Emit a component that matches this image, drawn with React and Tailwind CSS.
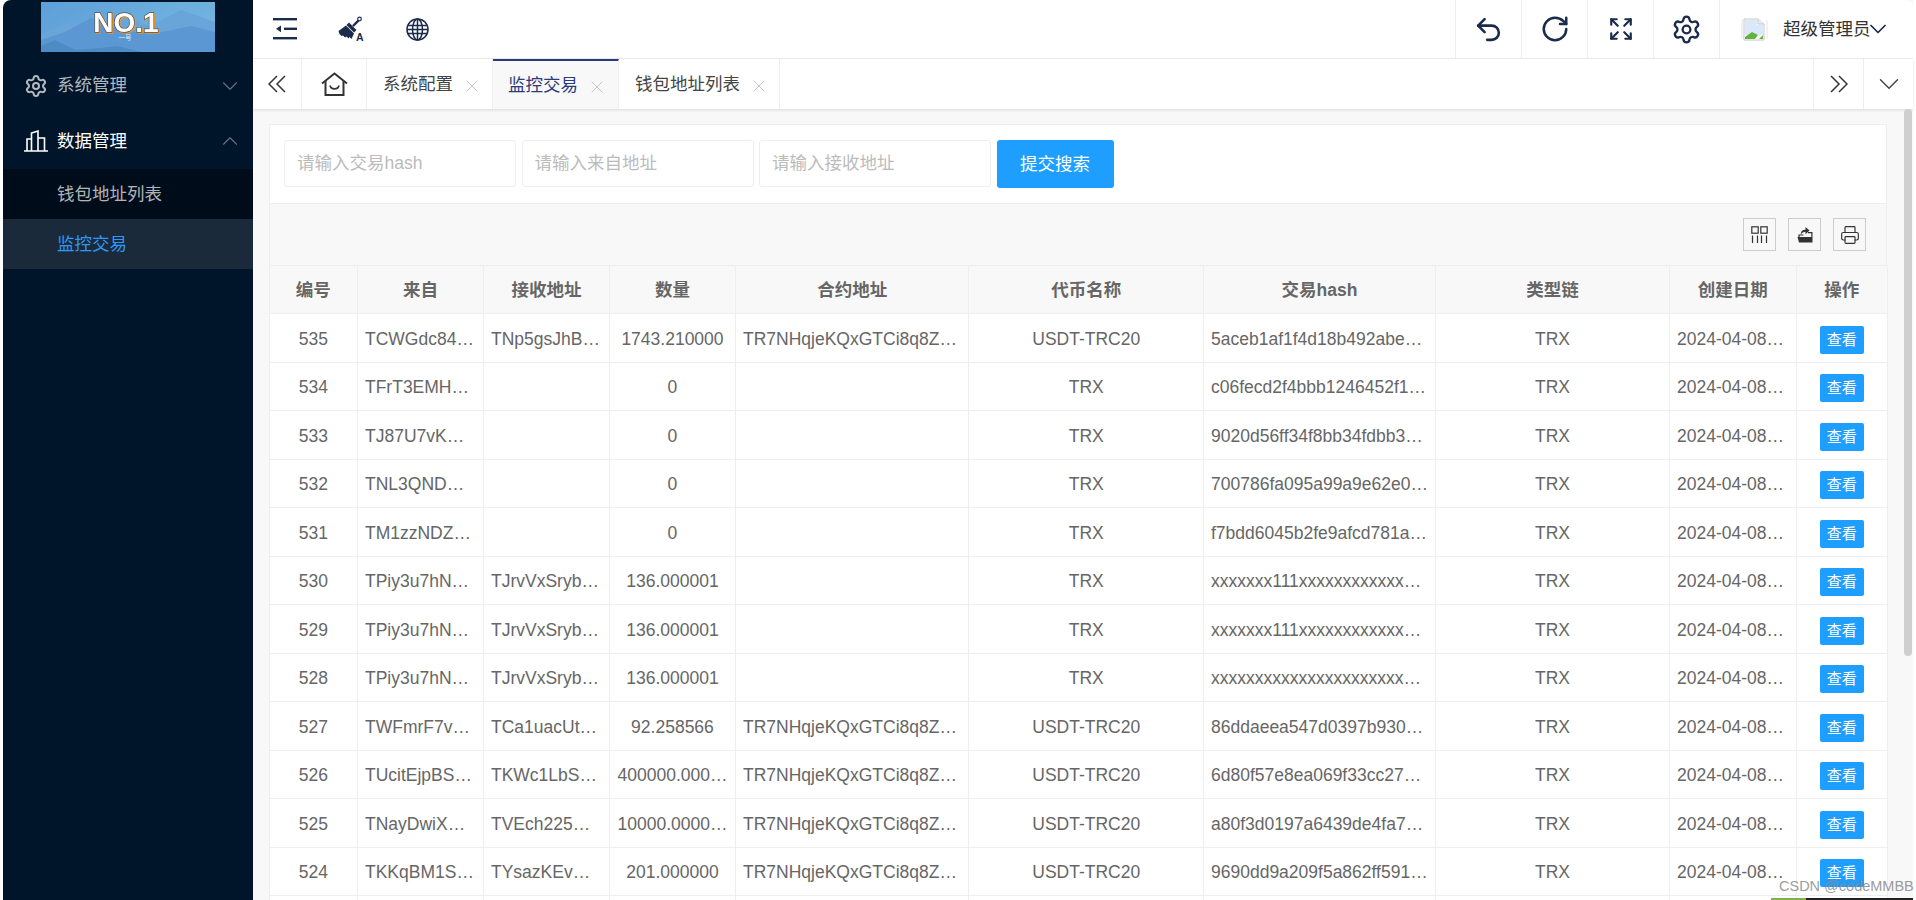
import React from "react";
import { ChevronDown, ChevronUp, Expand, Printer, RotateCw, Settings, Undo2, X } from "lucide-react";

const navy = "#1b2b4b";
const usdt = "TR7NHqjeKQxGTCi8q8Z…";

const rows = [
  { id: 535, from: "TCWGdc84…", to: "TNp5gsJhB…", amount: "1743.210000", contract: usdt, coin: "USDT-TRC20", hash: "5aceb1af1f4d18b492abe…" },
  { id: 534, from: "TFrT3EMH…", to: "", amount: "0", contract: "", coin: "TRX", hash: "c06fecd2f4bbb1246452f1…" },
  { id: 533, from: "TJ87U7vK…", to: "", amount: "0", contract: "", coin: "TRX", hash: "9020d56ff34f8bb34fdbb3…" },
  { id: 532, from: "TNL3QND…", to: "", amount: "0", contract: "", coin: "TRX", hash: "700786fa095a99a9e62e0…" },
  { id: 531, from: "TM1zzNDZ…", to: "", amount: "0", contract: "", coin: "TRX", hash: "f7bdd6045b2fe9afcd781a…" },
  { id: 530, from: "TPiy3u7hN…", to: "TJrvVxSryb…", amount: "136.000001", contract: "", coin: "TRX", hash: "xxxxxxx111xxxxxxxxxxxx…" },
  { id: 529, from: "TPiy3u7hN…", to: "TJrvVxSryb…", amount: "136.000001", contract: "", coin: "TRX", hash: "xxxxxxx111xxxxxxxxxxxx…" },
  { id: 528, from: "TPiy3u7hN…", to: "TJrvVxSryb…", amount: "136.000001", contract: "", coin: "TRX", hash: "xxxxxxxxxxxxxxxxxxxxxx…" },
  { id: 527, from: "TWFmrF7v…", to: "TCa1uacUt…", amount: "92.258566", contract: usdt, coin: "USDT-TRC20", hash: "86ddaeea547d0397b930…" },
  { id: 526, from: "TUcitEjpBS…", to: "TKWc1LbS…", amount: "400000.000…", contract: usdt, coin: "USDT-TRC20", hash: "6d80f57e8ea069f33cc27…" },
  { id: 525, from: "TNayDwiX…", to: "TVEch225…", amount: "10000.0000…", contract: usdt, coin: "USDT-TRC20", hash: "a80f3d0197a6439de4fa7…" },
  { id: 524, from: "TKKqBM1S…", to: "TYsazKEv…", amount: "201.000000", contract: usdt, coin: "USDT-TRC20", hash: "9690dd9a209f5a862ff591…" },
];

function Logo() {
  return (
    <svg width="174" height="50" viewBox="0 0 174 50" className="block">
      <defs>
        <linearGradient id="sky" x1="0" y1="0" x2="1" y2="0.4">
          <stop offset="0" stopColor="#5d9fd8" />
          <stop offset="1" stopColor="#72b4de" />
        </linearGradient>
      </defs>
      <rect width="174" height="50" fill="url(#sky)" />
      <path d="M0 32 L30 20 L52 26 L80 12 L108 24 L140 8 L174 20 V50 H0 Z" fill="#6aa5da" />
      <path d="M0 38 L24 30 L50 16 L78 28 L112 32 L150 24 L174 30 V50 H0 Z" fill="#5a97d3" />
      <path d="M0 44 L14 38 L34 48 L60 46 L76 44 L100 50 H0 Z" fill="#4d8bc4" />
      <text
        x="85"
        y="30"
        textAnchor="middle"
        fontFamily="Liberation Sans"
        fontWeight="700"
        fontSize="28"
        fill="#fff"
        stroke="#555"
        strokeWidth="1.4"
        paintOrder="stroke"
        className="[filter:drop-shadow(1.5px_1px_0_#e8962e)]"
      >
        NO.1
      </text>
      <text x="84" y="38" textAnchor="middle" fontFamily="Noto Sans CJK SC" fontSize="6.5" fill="#dcecf8">
        一号
      </text>
    </svg>
  );
}

function BuildingIcon() {
  return (
    <svg width="24" height="22" viewBox="0 0 24 22" fill="none" stroke="currentColor" strokeWidth="1.6">
      <path d="M0 21H24M3 21V9H7.5M7.5 21V3L14 1V21M14 8H20.5V21" />
    </svg>
  );
}

function CollapseIcon() {
  return (
    <svg width="24" height="22" viewBox="0 0 24 22" fill={navy}>
      <rect x="0" y="0" width="24" height="2.4" />
      <rect x="11" y="9.6" width="13" height="2.4" />
      <rect x="0" y="19" width="24" height="2.4" />
      <path d="M3 10.8L8 7.4V14.2Z" />
    </svg>
  );
}

function BroomIcon() {
  return (
    <svg width="27" height="26" viewBox="0 0 27 26">
      <circle cx="21.5" cy="3" r="1.8" fill="none" stroke={navy} strokeWidth="1.2" />
      <path d="M20.5 4.5L15 10" stroke={navy} strokeWidth="2.4" />
      <path d="M11 6.5L18.5 14L16 16.5L8.5 9Z" fill={navy} />
      <path d="M8 9.5L16 17.5L13.5 23L11.5 21L10.5 22.5L8.5 20.5L7 21.5L5 19.5L3.5 20L1.5 18L0.5 15Z" fill={navy} />
      <text x="18" y="25" fontFamily="Liberation Sans" fontWeight="700" fontSize="10.5" fill={navy}>
        A
      </text>
    </svg>
  );
}

function GlobeIcon() {
  return (
    <svg width="23" height="23" viewBox="0 0 23 23" fill="none" stroke={navy} strokeWidth="1.5">
      <circle cx="11.5" cy="11.5" r="10.5" />
      <ellipse cx="11.5" cy="11.5" rx="5" ry="10.5" />
      <path d="M11.5 1V22M1.5 7.5H21.5M1 11.5H22M1.5 15.5H21.5" />
    </svg>
  );
}

function HomeIcon() {
  return (
    <svg width="27" height="24" viewBox="0 0 27 24" fill="none" stroke="#333" strokeWidth="2">
      <path d="M1 11.5L13.5 1.5L26 11.5" />
      <path d="M4.5 9V23H22.5V9" />
      <path d="M9 13.5C10 18 17 18 18 13.5" strokeWidth="1.6" />
    </svg>
  );
}

function DoubleChevron({ right }) {
  return (
    <svg width="18" height="18" viewBox="0 0 18 18" fill="none" stroke="#333" strokeWidth="1.5">
      {right ? <path d="M1 1L9 9L1 17M9 1L17 9L9 17" /> : <path d="M9 1L1 9L9 17M17 1L9 9L17 17" />}
    </svg>
  );
}

function BrokenImage() {
  return (
    <svg width="27" height="23" viewBox="0 0 27 23" fill="none">
      <path d="M3 1H17L23 6V22H3Z" fill="#fff" stroke="#c6c6c6" />
      <path d="M17 1V6H23" stroke="#c6c6c6" fill="#eee" />
      <path d="M4 2H16V7H22V17H4Z" fill="#dbe7fa" />
      <path d="M4 21V19L11 14L17 17L14 21Z" fill="#63b23e" />
      <path d="M18 21L22 17V21Z" fill="#63b23e" />
      <path d="M1 2V21M26 2V21" stroke="#e4e4e4" />
    </svg>
  );
}

function ColsIcon() {
  return (
    <svg width="17" height="17" viewBox="0 0 17 17" fill="none" stroke="#333" strokeWidth="1.2">
      <rect x="0.8" y="0.8" width="6.4" height="6.4" />
      <rect x="9.8" y="0.8" width="6.4" height="6.4" />
      <path d="M1.5 9.5V17M6.5 9.5V17M10.5 9.5V17M15.5 9.5V17" />
    </svg>
  );
}

function ExportIcon() {
  return (
    <svg width="16" height="16" viewBox="0 0 16 16" fill="#333">
      <path d="M0.5 10H15.5V15.5H2Z" />
      <path d="M2 10V8H6.5" fill="none" stroke="#333" strokeWidth="1.2" />
      <path d="M11 5.6H14.9V10" fill="none" stroke="#333" strokeWidth="1.2" />
      <path d="M3.8 7.5C3.8 3.8 6 2.8 8.5 2.8V0L12.5 3.6L8.5 7.2V4.8C6.5 4.8 5 5.6 3.8 7.5Z" />
    </svg>
  );
}

function Tab({ label, active, wide }) {
  return (
    <div
      className={
        active
          ? "flex items-center border-r border-[#eee] border-t-2 border-t-[#2b3a7a] bg-[#f8f8f8] pl-[15px] pr-[11px] text-[#2b3a7a]"
          : "flex items-center border-r border-[#eee] pl-[16px] pr-[10px] text-[#444]"
      }
    >
      <span className="whitespace-nowrap">{label}</span>
      <X size={20} strokeWidth={1} className="ml-[9px] mt-[3px] text-[#bbb]" />
    </div>
  );
}

export default function App() {
  const columns = ["编号", "来自", "接收地址", "数量", "合约地址", "代币名称", "交易hash", "类型链", "创建日期", "操作"];
  const th = "border border-[#eee] pt-[2px] text-center font-bold text-[#666]";
  const cell = "border border-[#eee] px-[7px] pt-[2px] whitespace-nowrap overflow-hidden";

  return (
    <div className="relative flex h-[900px] w-full overflow-hidden bg-white px-[3px] font-['Liberation_Sans','Noto_Sans_CJK_SC',sans-serif] text-[17.5px] text-[#666]">
      {/* 侧边栏 */}
      <aside className="w-[250px] shrink-0 rounded-tl-lg bg-[#00152a] text-white/70">
        <div className="flex h-[58px] justify-center pt-[2px]">
          <Logo />
        </div>
        <div className="flex h-[55px] items-center pl-[21px] pr-[10px]">
          <Settings size={24} strokeWidth={2} />
          <span className="ml-[9px] flex-1">系统管理</span>
          <ChevronDown size={26} strokeWidth={1} className="text-white/40" />
        </div>
        <div className="flex h-[56px] items-center pl-[21px] pr-[10px] text-white">
          <BuildingIcon />
          <span className="ml-[9px] flex-1">数据管理</span>
          <ChevronUp size={26} strokeWidth={1} className="text-white/40" />
        </div>
        <div className="flex h-[50px] items-center bg-[#000c1a] pl-[54px]">钱包地址列表</div>
        <div className="flex h-[50px] items-center bg-[#1a2a3a] pl-[54px] text-[#2f97f5]">监控交易</div>
      </aside>

      <main className="flex min-w-0 flex-1 flex-col bg-[#f8f8f8]">
        {/* 顶部栏 */}
        <header className="flex h-[59px] shrink-0 items-stretch justify-between rounded-tr-lg border-b border-[#eee] bg-white text-[#333]">
          <div className="flex items-center pl-[20px]">
            <CollapseIcon />
            <span className="ml-[41px]">
              <BroomIcon />
            </span>
            <span className="ml-[41px]">
              <GlobeIcon />
            </span>
          </div>
          <div className="flex">
            <div className="flex w-[66px] items-center justify-center border-l border-[#eee]">
              <Undo2 size={31} color={navy} strokeWidth={2} />
            </div>
            <div className="flex w-[66px] items-center justify-center border-l border-[#eee]">
              <RotateCw size={30} color={navy} strokeWidth={2} />
            </div>
            <div className="flex w-[66px] items-center justify-center border-l border-[#eee]">
              <Expand size={26} color={navy} strokeWidth={2} />
            </div>
            <div className="flex w-[66px] items-center justify-center border-l border-[#eee]">
              <Settings size={31} color={navy} strokeWidth={1.8} />
            </div>
            <div className="flex w-[194px] items-center border-l border-[#eee] pl-[21px]">
              <BrokenImage />
              <span className="ml-[15px] whitespace-nowrap">超级管理员</span>
              <ChevronDown size={28} color={navy} strokeWidth={1.5} className="-ml-[7px]" />
            </div>
          </div>
        </header>

        {/* 标签页 */}
        <div className="flex h-[50px] shrink-0 items-stretch bg-white shadow-[0_1px_3px_rgba(0,0,0,0.12)]">
          <div className="flex w-[49px] items-center justify-center border-r border-[#eee]">
            <DoubleChevron />
          </div>
          <div className="flex w-[65px] items-center justify-center border-r border-[#eee]">
            <HomeIcon />
          </div>
          <Tab label="系统配置" />
          <Tab label="监控交易" active />
          <Tab label="钱包地址列表" />
          <div className="flex-1" />
          <div className="flex w-[50px] items-center justify-center border-l border-[#eee]">
            <DoubleChevron right />
          </div>
          <div className="flex w-[50px] items-center justify-center border-l border-[#eee]">
            <ChevronDown size={34} color="#444" strokeWidth={1} />
          </div>
        </div>

        <div className="flex min-h-0 flex-1">
          <div className="min-w-0 flex-1 overflow-hidden pl-[15.6px] pr-[17px] pt-[15px]">
            {/* 搜索 */}
            <div className="flex h-[80px] items-start gap-[5.5px] border border-[#eee] bg-white pl-[14.5px] pt-[15px]">
              <input placeholder="请输入交易hash" className="h-[47px] w-[232px] rounded-[3px] border border-[#eee] pl-[12px] placeholder:text-[#bbb]" />
              <input placeholder="请输入来自地址" className="h-[47px] w-[232px] rounded-[3px] border border-[#eee] pl-[12px] placeholder:text-[#bbb]" />
              <input placeholder="请输入接收地址" className="h-[47px] w-[232px] rounded-[3px] border border-[#eee] pl-[12px] placeholder:text-[#bbb]" />
              <button className="h-[48px] w-[117px] rounded-[3px] bg-[#1e9fff] text-white">提交搜索</button>
            </div>

            {/* 工具栏 */}
            <div className="flex h-[61px] items-center justify-end gap-3 border-x border-[#eee] pr-[20px]">
              <div className="flex size-[33px] items-center justify-center border border-[#ccc]">
                <ColsIcon />
              </div>
              <div className="flex size-[33px] items-center justify-center border border-[#ccc]">
                <ExportIcon />
              </div>
              <div className="flex size-[33px] items-center justify-center border border-[#ccc]">
                <Printer size={20} color="#333" strokeWidth={1.4} />
              </div>
            </div>

            <table className="w-full table-fixed border-collapse bg-white">
              <colgroup>
                <col className="w-[88.4px]" />
                <col className="w-[126px]" />
                <col className="w-[126px]" />
                <col className="w-[126px]" />
                <col className="w-[233.5px]" />
                <col className="w-[234.5px]" />
                <col className="w-[232px]" />
                <col className="w-[234px]" />
                <col className="w-[126.6px]" />
                <col className="w-[91.4px]" />
              </colgroup>
              <thead>
                <tr className="h-[48px] bg-[#f8f8f8]">
                  {columns.map((c) => (
                    <th key={c} className={th}>
                      {c}
                    </th>
                  ))}
                </tr>
              </thead>
              <tbody>
                {rows.map((r) => (
                  <tr key={r.id} className="h-[48.5px]">
                    <td className={cell + " text-center"}>{r.id}</td>
                    <td className={cell}>{r.from}</td>
                    <td className={cell}>{r.to}</td>
                    <td className={cell + " text-center"}>{r.amount}</td>
                    <td className={cell}>{r.contract}</td>
                    <td className={cell + " text-center"}>{r.coin}</td>
                    <td className={cell}>{r.hash}</td>
                    <td className={cell + " text-center"}>TRX</td>
                    <td className={cell}>2024-04-08…</td>
                    <td className={cell}>
                      <button className="mx-auto mt-[2px] block h-[28px] w-[44px] rounded-[2px] bg-[#1e9fff] text-[15px] text-white">查看</button>
                    </td>
                  </tr>
                ))}
                <tr className="h-[48.5px]">
                  {columns.map((c) => (
                    <td key={c} className={cell} />
                  ))}
                </tr>
              </tbody>
            </table>
          </div>

          {/* 滚动条 */}
          <div className="w-[9px] shrink-0 pr-px">
            <div className="h-[547px] rounded-full bg-[#cfcfcf]" />
          </div>
        </div>
      </main>

      {/* CSDN 水印 */}
      <div className="absolute left-[1779px] top-[876px] whitespace-nowrap text-[14.5px] text-[#888]/85">CSDN @codeMMBB</div>
      <div className="absolute bottom-0 left-[1771px] flex h-[2px] w-[142px]">
        <div className="w-[35px] bg-[#7ab648]" />
        <div className="flex-1 bg-[#222]" />
      </div>
    </div>
  );
}
